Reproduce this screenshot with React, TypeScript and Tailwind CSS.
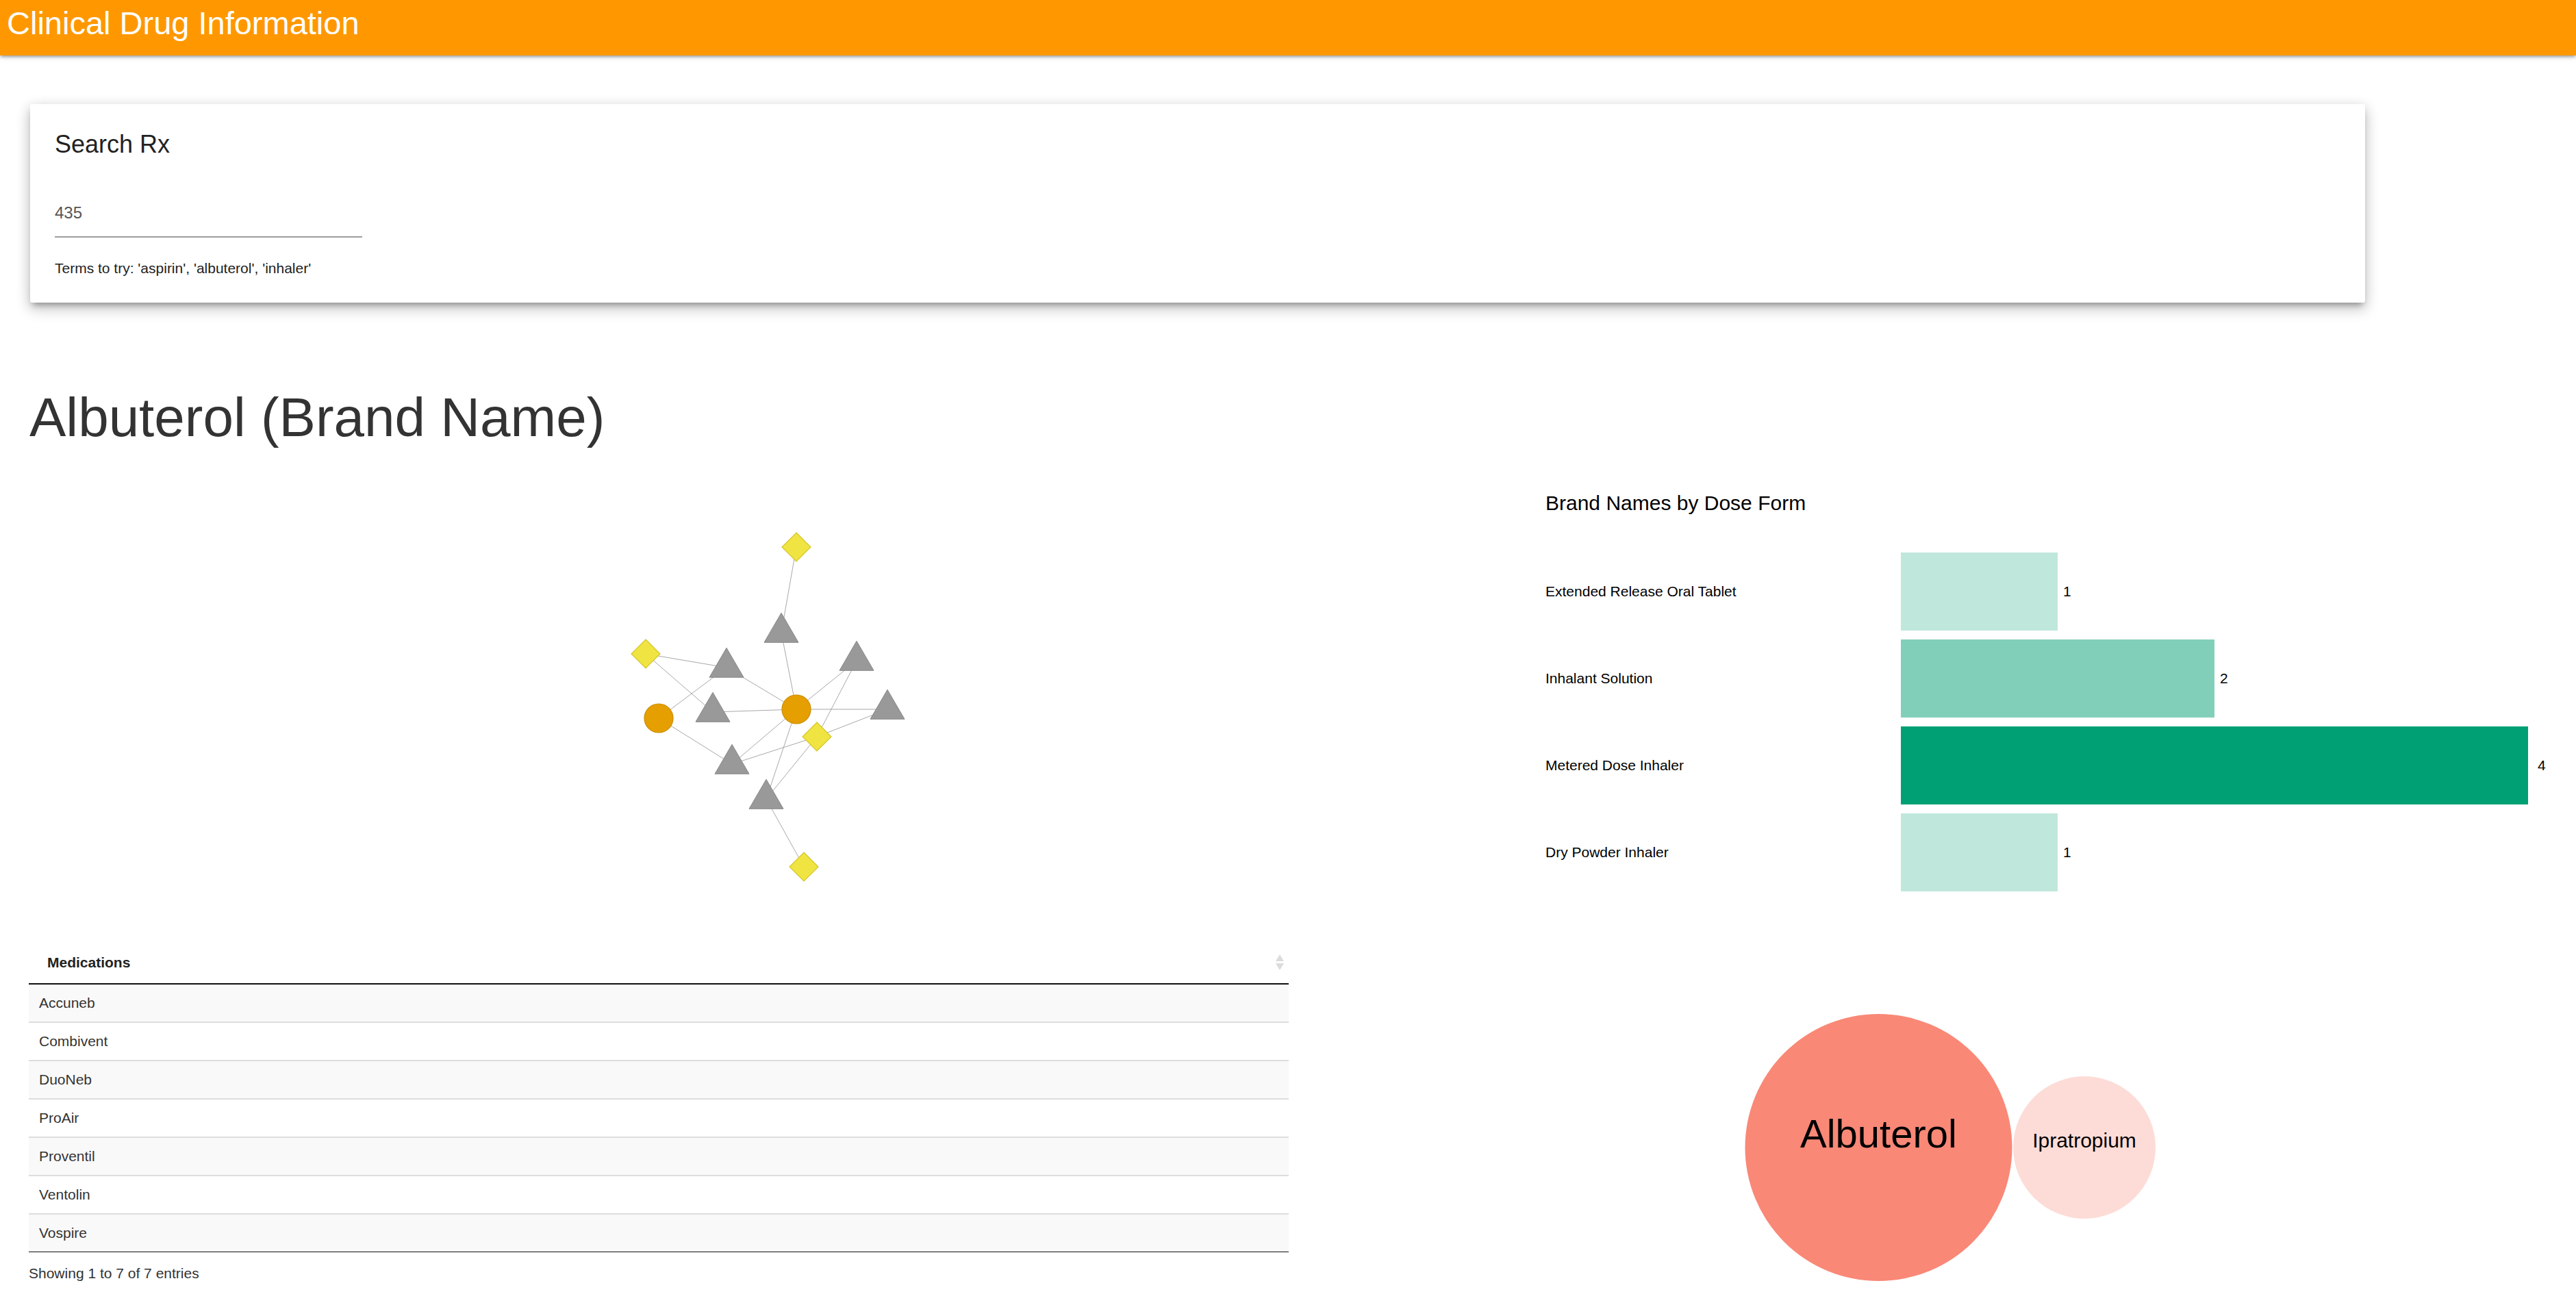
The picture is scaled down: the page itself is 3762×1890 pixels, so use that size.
import React from "react";

type NodeT = { id: string; x: number; y: number; kind: "c" | "t" | "d" };

const nodes: NodeT[] = [
  { id: "D1", x: 1121, y: 145, kind: "d" },
  { id: "T1", x: 1099, y: 270, kind: "t" },
  { id: "D2", x: 901, y: 301, kind: "d" },
  { id: "T2", x: 1019, y: 321, kind: "t" },
  { id: "T3", x: 1209, y: 311, kind: "t" },
  { id: "C1", x: 920, y: 395, kind: "c" },
  { id: "T4", x: 999, y: 386, kind: "t" },
  { id: "C2", x: 1121, y: 382, kind: "c" },
  { id: "T5", x: 1254, y: 382, kind: "t" },
  { id: "D3", x: 1151, y: 422, kind: "d" },
  { id: "T6", x: 1027, y: 462, kind: "t" },
  { id: "T7", x: 1077, y: 513, kind: "t" },
  { id: "D4", x: 1132, y: 612, kind: "d" },
];

const edges: [string, string][] = [
  ["D1", "T1"],
  ["T1", "C2"],
  ["D2", "T2"],
  ["D2", "T4"],
  ["T2", "C1"],
  ["T2", "C2"],
  ["T4", "C2"],
  ["T3", "C2"],
  ["T3", "D3"],
  ["C2", "T5"],
  ["T5", "D3"],
  ["C1", "T6"],
  ["T6", "C2"],
  ["T6", "D3"],
  ["C2", "T7"],
  ["D3", "T7"],
  ["T7", "D4"],
];

const byId = (id: string) => nodes.find((n) => n.id === id)!;

function NetworkGraph() {
  return (
    <svg width={1840} height={721} className="block">
      {edges.map(([a, b], i) => {
        const na = byId(a);
        const nb = byId(b);
        return (
          <line
            key={i}
            x1={na.x}
            y1={na.y}
            x2={nb.x}
            y2={nb.y}
            stroke="#999"
            strokeWidth={1}
            strokeOpacity={0.85}
          />
        );
      })}
      {nodes.map((n) => {
        if (n.kind === "c")
          return (
            <circle key={n.id} cx={n.x} cy={n.y} r={21} fill="#E69F00" stroke="#c98b00" strokeWidth={1.2} />
          );
        if (n.kind === "t")
          return (
            <polygon
              key={n.id}
              points={`${n.x},${n.y - 28.7} ${n.x + 25},${n.y + 14.3} ${n.x - 25},${n.y + 14.3}`}
              fill="#999999"
              stroke="#888888"
              strokeWidth={1}
            />
          );
        return (
          <polygon
            key={n.id}
            points={`${n.x},${n.y - 21} ${n.x + 21},${n.y} ${n.x},${n.y + 21} ${n.x - 21},${n.y}`}
            fill="#F0E442"
            stroke="#d5c52a"
            strokeWidth={1.2}
          />
        );
      })}
    </svg>
  );
}

const bars = [
  { label: "Extended Release Oral Tablet", value: 1, color: "bg-[#c0e7dc]", gap: "ml-[8px]" },
  { label: "Inhalant Solution", value: 2, color: "bg-[#82cfb9]", gap: "ml-[8px]" },
  { label: "Metered Dose Inhaler", value: 4, color: "bg-[#00a074]", gap: "ml-[14px]" },
  { label: "Dry Powder Inhaler", value: 1, color: "bg-[#c0e7dc]", gap: "ml-[8px]" },
];

const meds = ["Accuneb", "Combivent", "DuoNeb", "ProAir", "Proventil", "Ventolin", "Vospire"];

function SortIcon() {
  return (
    <svg width={12} height={23} viewBox="0 0 12 23" className="block">
      <polygon points="6,0 12,10 0,10" fill="#dcdcdc" />
      <polygon points="0,13 12,13 6,23" fill="#dcdcdc" />
    </svg>
  );
}

export default function App() {
  return (
    <div className="min-h-[1890px] w-[3762px] bg-white font-['Liberation_Sans',Arial,sans-serif] text-[#333]">
      <header className="h-[81px] bg-[#ff9800] shadow-[0_3px_3px_0_rgba(0,0,0,0.14),0_4px_2px_-3px_rgba(0,0,0,0.12),0_2px_8px_0_rgba(0,0,0,0.2)]">
        <div className="pl-[10px] text-[47px] leading-[67px] text-white">Clinical Drug Information</div>
      </header>

      <div className="ml-[44px] mt-[71px] w-[3410px] rounded-[3px] bg-white px-[36px] pt-[39px] pb-[35px] shadow-[0_10px_20px_2px_rgba(0,0,0,0.14),0_3px_18px_2px_rgba(0,0,0,0.10),0_7px_8px_-4px_rgba(0,0,0,0.3)]">
        <div className="text-[36px] leading-[40px] text-[#222]">Search Rx</div>
        <div className="mt-[66px] w-[449px] border-b-2 border-[#9e9e9e] pb-[20px] text-[24px] leading-[28px] text-[#555]">
          435
        </div>
        <div className="mt-[30px] text-[21px] leading-[30px] text-[#222]">
          Terms to try: 'aspirin', 'albuterol', 'inhaler'
        </div>
      </div>

      <h1 className="mt-[124px] pl-[43px] text-[80px] leading-[88px] text-[#333]">Albuterol (Brand Name)</h1>

      <div className="flex">
        <div className="ml-[42px] w-[1840px] shrink-0">
          <NetworkGraph />
          <table className="w-full border-collapse text-[21px] leading-[30px]">
            <thead>
              <tr>
                <th className="relative border-b-2 border-[#111] pt-[16px] pb-[15px] pl-[27px] text-left font-bold text-[#222]">
                  Medications
                  <span className="absolute right-[7px] top-[19px]">
                    <SortIcon />
                  </span>
                </th>
              </tr>
            </thead>
            <tbody>
              {meds.map((m, i) => (
                <tr key={m} className={i % 2 === 0 ? "bg-[#f9f9f9]" : "bg-white"}>
                  <td
                    className={
                      (i === 0 ? "" : "border-t-2 border-[#ddd] ") +
                      (i === meds.length - 1 ? "border-b border-b-[#111] " : "") +
                      "py-[12px] pl-[15px] text-[#333]"
                    }
                  >
                    {m}
                  </td>
                </tr>
              ))}
            </tbody>
          </table>
          <div className="mt-[16px] text-[21px] leading-[30px] text-[#333]">Showing 1 to 7 of 7 entries</div>
        </div>

        <div className="ml-[375px] flex-1">
          <div className="mt-[64px] text-[30px] leading-[34px] text-black">Brand Names by Dose Form</div>
          <div className="mt-[55px] flex flex-col gap-[13px]">
            {bars.map((b, i) => (
              <div key={i} className="flex h-[114px] items-center">
                <div className="w-[519px] shrink-0 text-[21px] leading-[30px] text-black">{b.label}</div>
                <div className={`h-[114px] ${b.color}`} style={{ width: b.value * 229 }} />
                <div className={`${b.gap} text-[21px] leading-[30px] text-black`}>{b.value}</div>
              </div>
            ))}
          </div>
          <svg width={1505} height={587} className="block">
            <circle cx={486.5} cy={374} r={195} fill="#f98877" />
            <circle cx={787} cy={374} r={104} fill="#fddcd7" />
            <text
              x={486.5}
              y={374}
              textAnchor="middle"
              fontSize={58}
              fill="#000"
              fontFamily="'Liberation Sans', Arial, sans-serif"
            >
              Albuterol
            </text>
            <text
              x={787}
              y={374}
              textAnchor="middle"
              fontSize={30}
              fill="#000"
              fontFamily="'Liberation Sans', Arial, sans-serif"
            >
              Ipratropium
            </text>
          </svg>
        </div>
      </div>
    </div>
  );
}
